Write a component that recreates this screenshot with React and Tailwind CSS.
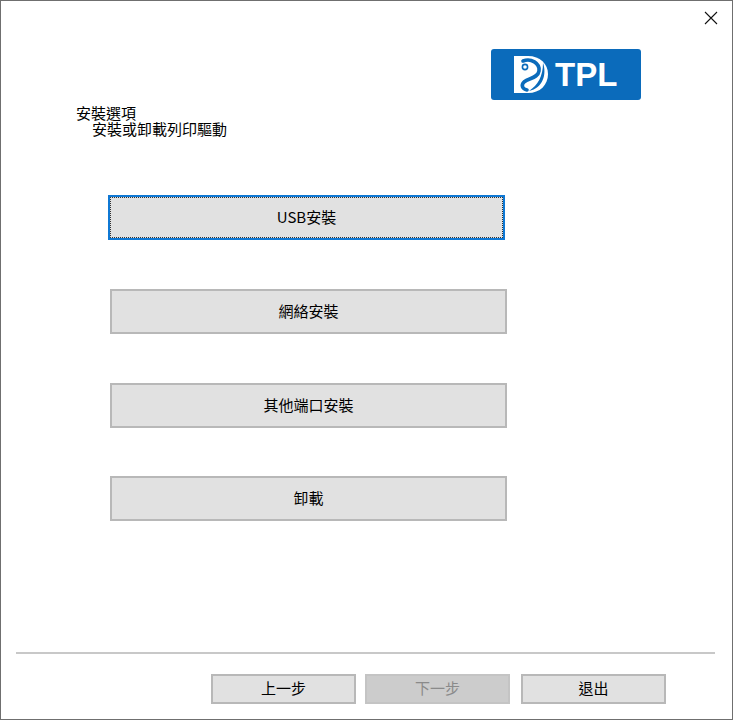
import React from "react";

const font = { fontFamily: '"Noto Sans CJK TC", "Noto Sans CJK SC", sans-serif' };

function Logo() {
  return (
    <div className="w-[150px] h-[51px] rounded-[3px] bg-[#0b6bbb] flex items-center pl-[23px] gap-[7px]">
      <svg width="34" height="37" viewBox="0 0 34 37" className="shrink-0">
        <path d="M0 0H14C26 0 34 8 34 18C34 29 26 37 14 37H0Z" fill="#fff" />
        <path d="M9 5C17 2 26 7 25 15C24 22 15 22 10 26C7 29 8 33 13 34" stroke="#0b6bbb" strokeWidth="3.6" strokeLinecap="round" fill="none" />
        <circle cx="11" cy="11" r="2.6" stroke="#0b6bbb" strokeWidth="1.6" fill="#fff" />
        <path d="M29 7C33 18 29 32 15 35C24 29 29 20 29 7Z" fill="#0b6bbb" />
      </svg>
      <span className="text-white text-[33px] leading-none font-bold" style={{ fontFamily: '"Liberation Sans", sans-serif' }}>TPL</span>
    </div>
  );
}

function BigButton({ children }) {
  return (
    <button className="w-[397px] h-[45px] ml-[109px] bg-[#e1e1e1] border-2 border-[#b8b8b8] text-[15px] text-[#000] flex items-center justify-center">
      {children}
    </button>
  );
}

function FootButton({ children, disabled }) {
  return (
    <button
      className={
        disabled
          ? "w-[145px] h-[30px] bg-[#cccccc] border-2 border-[#c4c4c4] text-[15px] leading-[22px] text-[#8a8a8a] flex items-center justify-center pb-[3px]"
          : "w-[145px] h-[30px] bg-[#e1e1e1] border-2 border-[#b8b8b8] text-[15px] leading-[22px] text-[#000] flex items-center justify-center pb-[3px]"
      }
    >
      {children}
    </button>
  );
}

export default function App() {
  return (
    <div className="w-[733px] h-[720px] bg-white border border-[#6f6f6f] flex flex-col relative overflow-hidden" style={font}>
      <svg width="14" height="14" viewBox="0 0 14 14" className="absolute top-[10px] right-[14px]">
        <path d="M1 1L13 13M13 1L1 13" stroke="#111" strokeWidth="1.1" fill="none" />
      </svg>

      <div className="pt-[48px] pl-[490px]">
        <Logo />
      </div>

      <div className="mt-[4px] pl-[75px] text-[15px] leading-[17px] text-[#000]">
        <div>安裝選項</div>
        <div className="pl-[16px] -mt-[1px]">安裝或卸載列印驅動</div>
      </div>

      <div className="mt-[58px] flex flex-col">
        <button className="w-[397px] h-[45px] ml-[107px] bg-[#e1e1e1] border-2 border-[#0f78d4] text-[15px] text-[#000] flex items-center justify-center p-0">
          <span className="w-full h-full border border-dotted border-[#333] flex items-center justify-center">USB安裝</span>
        </button>
        <div className="h-[49px]" />
        <BigButton>網絡安裝</BigButton>
        <div className="h-[49px]" />
        <BigButton>其他端口安裝</BigButton>
        <div className="h-[48px]" />
        <BigButton>卸載</BigButton>
      </div>

      <div className="mt-auto pb-[15px]">
        <div className="ml-[15px] mr-[17px] h-[2px] bg-[#c8c8c8]" />
        <div className="mt-[20px] ml-[210px] flex">
          <FootButton>上一步</FootButton>
          <div className="w-[9px]" />
          <FootButton disabled>下一步</FootButton>
          <div className="w-[11px]" />
          <FootButton>退出</FootButton>
        </div>
      </div>
    </div>
  );
}
